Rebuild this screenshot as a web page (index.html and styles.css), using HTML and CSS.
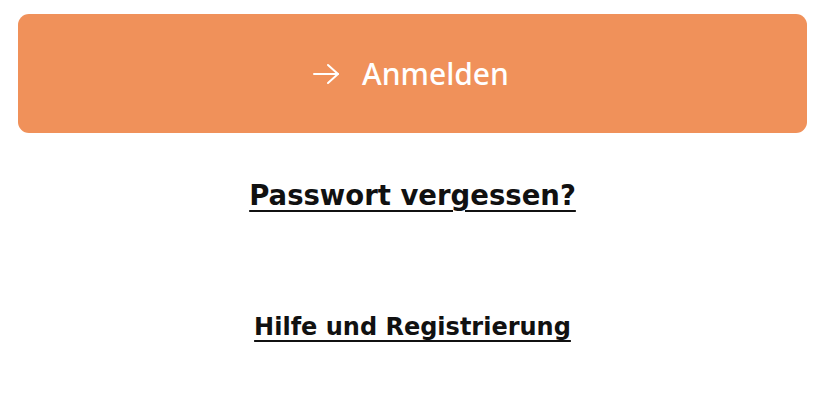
FILE: index.html
```html
<!DOCTYPE html>
<html lang="de">
<head>
    <meta charset="UTF-8">
    <meta name="viewport" content="width=device-width, initial-scale=1.0">
    <title>Anmelden</title>
    <link rel="stylesheet" href="styles.css">
</head>
<body>
    <main class="login-actions">
        <button type="submit" class="button">
            <svg class="button-icon" width="28" height="22" viewBox="0 0 28 22" fill="none" stroke="currentColor" stroke-width="2" stroke-linecap="round" stroke-linejoin="round">
                <path d="M2 11h24"/>
                <path d="M16 2l10 9-10 9"/>
            </svg>
            <span>Anmelden</span>
        </button>
        <p class="link-row link-forgot"><a href="#" class="link">Passwort vergessen?</a></p>
        <p class="link-row link-help"><a href="#" class="link">Hilfe und Registrierung</a></p>
    </main>
</body>
</html>
```

FILE: styles.css
```css
body {
    font-family: 'Noto Sans', 'Liberation Sans', sans-serif;
    background-color: #fff;
    color: #111;
    margin: 0;
    padding: 0;
}
.login-actions {
    display: flex;
    flex-direction: column;
    align-items: center;
    padding: 14px 33px 0 18px;
}
.button {
    display: flex;
    align-items: center;
    justify-content: center;
    gap: 22px;
    width: 100%;
    height: 119px;
    font-family: inherit;
    font-size: 30px;
    font-weight: 500;
    color: #fff;
    background-color: #f0915a;
    border: none;
    border-radius: 11px;
    cursor: pointer;
}
.button-icon {
    flex: none;
    margin-left: -4px;
}
.link-row {
    margin: 0;
    line-height: 1.3;
    text-align: center;
}
.link {
    font-family: 'DejaVu Sans', 'Noto Sans', sans-serif;
    color: #111;
    font-weight: 700;
    text-decoration: underline;
    text-decoration-thickness: 2px;
    text-underline-offset: 5px;
}
.link-forgot {
    margin-top: 44px;
    font-size: 27.5px;
}
.link-help {
    margin-top: 96px;
    font-size: 24px;
}
```
